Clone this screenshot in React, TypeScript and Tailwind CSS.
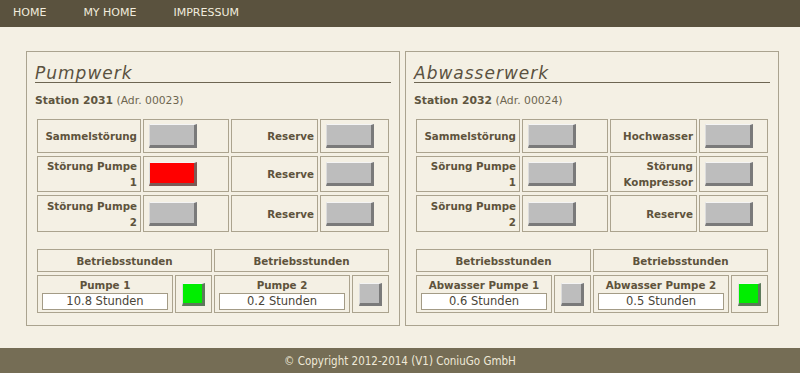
type Lamp = 'off' | 'red' | 'green';

interface Signal {
    label: string[];
    state: Lamp;
}

interface Station {
    title: string;
    number: string;
    adr: string;
    left: Signal[];
    right: Signal[];
    pumps: { name: string; hours: string; state: Lamp }[];
}

const stations: Station[] = [
    {
        title: 'Pumpwerk',
        number: 'Station 2031',
        adr: '(Adr. 00023)',
        left: [
            { label: ['Sammelstörung'], state: 'off' },
            { label: ['Störung Pumpe', '1'], state: 'red' },
            { label: ['Störung Pumpe', '2'], state: 'off' },
        ],
        right: [
            { label: ['Reserve'], state: 'off' },
            { label: ['Reserve'], state: 'off' },
            { label: ['Reserve'], state: 'off' },
        ],
        pumps: [
            { name: 'Pumpe 1', hours: '10.8 Stunden', state: 'green' },
            { name: 'Pumpe 2', hours: '0.2 Stunden', state: 'off' },
        ],
    },
    {
        title: 'Abwasserwerk',
        number: 'Station 2032',
        adr: '(Adr. 00024)',
        left: [
            { label: ['Sammelstörung'], state: 'off' },
            { label: ['Sörung Pumpe', '1'], state: 'off' },
            { label: ['Sörung Pumpe', '2'], state: 'off' },
        ],
        right: [
            { label: ['Hochwasser'], state: 'off' },
            { label: ['Störung', 'Kompressor'], state: 'off' },
            { label: ['Reserve'], state: 'off' },
        ],
        pumps: [
            { name: 'Abwasser Pumpe 1', hours: '0.6 Stunden', state: 'off' },
            { name: 'Abwasser Pumpe 2', hours: '0.5 Stunden', state: 'green' },
        ],
    },
];

const lampColor: Record<Lamp, string> = {
    off: 'bg-[#bdbdbd] border-r-[#7a7a7a] border-b-[#7a7a7a]',
    red: 'bg-[#ff0000] border-r-[#7d5a55] border-b-[#7d5a55]',
    green: 'bg-[#00ee00] border-r-[#5d7a5a] border-b-[#5d7a5a]',
};

function LampButton({ state, square }: { state: Lamp; square?: boolean }) {
    return (
        <div
            className={`${square ? 'w-[23px] h-[23px]' : 'w-[48px] h-[24px]'} border-t border-l border-r-[3px] border-b-[3px] border-t-[#f4f4f4] border-l-[#dcdcdc] ${lampColor[state]}`}
        />
    );
}

const cell = 'border border-[#aba38e]';
const labelText = 'text-[10.3px] leading-[16px] font-bold text-[#5e533c]';

function Label({ lines }: { lines: string[] }) {
    return (
        <div>
            {lines.map((l) => (
                <div key={l}>{l}</div>
            ))}
        </div>
    );
}

function Panel({ station }: { station: Station }) {
    const rowHeights = ['h-[34px]', 'h-[36px]', 'h-[37px]'];
    return (
        <div className="flex-1 border border-[#aaa38f] px-[8px] pt-[13px] pb-[12px]">
            {/* Title */}
            <div className="border-b border-[#6d6552]">
                <h2 className="text-[17px] leading-[17px] italic tracking-[1px] text-[#5a5140]">
                    {station.title}
                </h2>
            </div>
            <div className="mt-[11px] text-[10.8px] leading-[14px] text-[#5e553f]">
                <span className="font-bold">{station.number}</span>{' '}
                <span className="text-[#6e6650]">{station.adr}</span>
            </div>

            {/* Signals */}
            <div className="mx-[2px] mt-[11px] grid grid-cols-[104px_86px_87px_69px] gap-x-[2px] gap-y-[3px]">
                {station.left.map((sig, i) => (
                    <div key={i} className="contents">
                        <div className={`${cell} ${rowHeights[i]} flex items-center justify-end px-[3px] text-right ${labelText}`}>
                            <Label lines={sig.label} />
                        </div>
                        <div className={`${cell} ${rowHeights[i]} flex items-center pl-[5px]`}>
                            <LampButton state={sig.state} />
                        </div>
                        <div className={`${cell} ${rowHeights[i]} flex items-center justify-end px-[3px] text-right ${labelText}`}>
                            <Label lines={station.right[i].label} />
                        </div>
                        <div className={`${cell} ${rowHeights[i]} flex items-center pl-[5px]`}>
                            <LampButton state={station.right[i].state} />
                        </div>
                    </div>
                ))}
            </div>

            {/* Betriebsstunden */}
            <div className="mx-[2px] mt-[17px] grid grid-cols-[136px_37px_136px_37px] gap-x-[2px] gap-y-[3px]">
                <div className={`${cell} col-span-2 h-[23px] flex items-center justify-center ${labelText}`}>
                    Betriebsstunden
                </div>
                <div className={`${cell} col-span-2 h-[23px] flex items-center justify-center ${labelText}`}>
                    Betriebsstunden
                </div>
                {station.pumps.map((p) => (
                    <div key={p.name} className="contents">
                        <div className={`${cell} h-[38px] flex flex-col items-center px-[4px] pt-[2px]`}>
                            <div className="text-[10.3px] leading-[15px] font-bold text-[#5e533c]">{p.name}</div>
                            <div className="w-full h-[17px] bg-white border border-[#a39b86] text-center text-[11.5px] leading-[15px] text-[#4a4538]">
                                {p.hours}
                            </div>
                        </div>
                        <div className={`${cell} h-[38px] flex items-center justify-center`}>
                            <LampButton state={p.state} square />
                        </div>
                    </div>
                ))}
            </div>
        </div>
    );
}

export default function App() {
    return (
        <div className="min-h-[373px] flex flex-col bg-[#f4f0e4] font-['DejaVu_Sans',Verdana,sans-serif]">
            {/* Nav */}
            <nav className="h-[27px] bg-[#5a523e] flex items-center pl-[13px] gap-[37px] text-[11px] text-[#f1ecdd]">
                <span>HOME</span>
                <span>MY HOME</span>
                <span>IMPRESSUM</span>
            </nav>

            {/* Content */}
            <main className="flex gap-[5px] pl-[26px] pr-[23px] pt-[24px] pb-[21px]">
                {stations.map((s) => (
                    <Panel key={s.title} station={s} />
                ))}
            </main>

            {/* Footer */}
            <footer className="h-[25px] mt-auto bg-[#756d55] flex items-center justify-center pt-[2px] text-[11.5px] text-[#efe9d8] font-['DejaVu_Sans_Condensed','DejaVu_Sans',sans-serif]">
                © Copyright 2012-2014 (V1) ConiuGo GmbH
            </footer>
        </div>
    );
}
